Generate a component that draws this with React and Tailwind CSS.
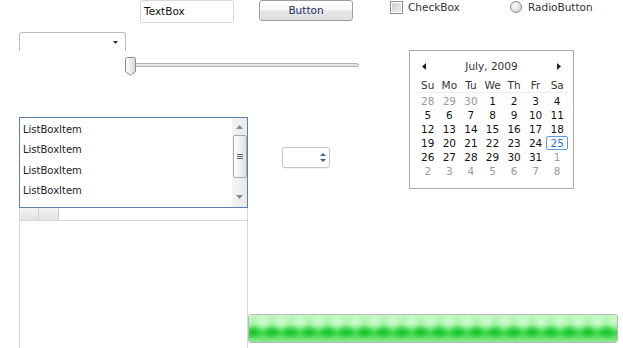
import React from "react";

const FONT = "font-['DejaVu_Sans',sans-serif]";

const weeks = [
  [[28, 1], [29, 1], [30, 1], [1], [2], [3], [4]],
  [[5], [6], [7], [8], [9], [10], [11]],
  [[12], [13], [14], [15], [16], [17], [18]],
  [[19], [20], [21], [22], [23], [24], [25, 0, 1]],
  [[26], [27], [28], [29], [30], [31], [1, 1]],
  [[2, 1], [3, 1], [4, 1], [5, 1], [6, 1], [7, 1], [8, 1]],
];

const dayNames = ["Su", "Mo", "Tu", "We", "Th", "Fr", "Sa"];

function Calendar() {
  return (
    <div className="absolute left-[409px] top-[50px] w-[165px] h-[139px] border border-[#ababab] bg-white pt-[8px]">
      {/* Header */}
      <div className="flex items-center justify-between h-[14px] pl-[12px] pr-[12px]">
        <svg width="4" height="7" viewBox="0 0 4 7">
          <path d="M4 0 L0 3.5 L4 7 Z" fill="#222" />
        </svg>
        <span className="text-[10.5px] text-[#333] leading-none">July, 2009</span>
        <svg width="4" height="7" viewBox="0 0 4 7">
          <path d="M0 0 L4 3.5 L0 7 Z" fill="#222" />
        </svg>
      </div>
      <div className="ml-[7px] w-[151px] mt-[6px] grid grid-cols-7 h-[14px] border-b border-[#ececec]">
        {dayNames.map((d) => (
          <div key={d} className="flex items-center justify-center text-[10.5px] text-[#333] leading-none">
            {d}
          </div>
        ))}
      </div>
      <div className="ml-[7px] w-[151px] mt-[1px] grid grid-cols-7">
        {weeks.flat().map(([n, other, today], i) => (
          <div
            key={i}
            className={
              "flex items-center justify-center h-[14px] text-[10.5px] leading-none " +
              (today
                ? "border border-[#5b9ddf] rounded-[2px] text-[#2a6fc9]"
                : other
                ? "text-[#9a9a9a]"
                : "text-[#111]")
            }
          >
            {n}
          </div>
        ))}
      </div>
    </div>
  );
}

function ListBox() {
  return (
    <div className="absolute left-[19px] top-[117px] w-[229px] h-[91px] border border-[#5e80a6] bg-white flex">
      <div className="flex-1 pt-[1px] pl-[3px]">
        {[0, 1, 2, 3].map((i) => (
          <div key={i} className="h-[20.5px] flex items-center text-[10px] text-[#222]">
            ListBoxItem
          </div>
        ))}
      </div>
      {/* Scrollbar */}
      <div className="w-[15px] h-full bg-[linear-gradient(to_right,#f4f4f4,#e9e9e9)] flex flex-col items-center">
        <div className="h-[17px] flex items-center justify-center">
          <svg width="7" height="4" viewBox="0 0 7 4">
            <path d="M0 4 L3.5 0 L7 4 Z" fill="#8a8a8a" />
          </svg>
        </div>
        <div className="w-[14px] h-[43px] rounded-[2px] border border-[#a9a9a9] bg-[linear-gradient(to_right,#ffffff,#e2e2e2)] flex flex-col items-center justify-center gap-[1px]">
          <div className="w-[6px] h-[1px] bg-[#666]" />
          <div className="w-[6px] h-[1px] bg-[#666]" />
          <div className="w-[6px] h-[1px] bg-[#666]" />
        </div>
        <div className="flex-1 flex items-end justify-center pb-[8px]">
          <svg width="7" height="4" viewBox="0 0 7 4">
            <path d="M0 0 L3.5 4 L7 0 Z" fill="#8a8a8a" />
          </svg>
        </div>
      </div>
    </div>
  );
}

function DataGrid() {
  return (
    <div className="absolute left-[19px] top-[208px] w-[229px] h-[150px] border-l border-r border-[#d6d6d6] bg-white">
      <div className="flex h-[13px] border-b border-[#d8d8d8]">
        <div className="w-[19px] h-full bg-[linear-gradient(to_bottom,#f3f3f3,#e3e3e3)] border-r border-[#d0d0d0]" />
        <div className="w-[20px] h-full bg-[linear-gradient(to_bottom,#f3f3f3,#e3e3e3)] border-r border-[#d0d0d0]" />
      </div>
    </div>
  );
}

export default function App() {
  return (
    <div className={`relative w-[623px] h-[348px] overflow-hidden bg-white ${FONT}`}>
      {/* TextBox */}
      <div className="absolute left-[140px] top-0 w-[94px] h-[23px] rounded-[2px] border border-[#d3dae3] bg-white flex items-center pl-[3px] text-[10.5px] text-[#111]">
        TextBox
      </div>

      {/* Button */}
      <div className="absolute left-[259px] top-0 w-[94px] h-[21px] rounded-[3px] border border-[#9c9c9c] bg-[linear-gradient(to_bottom,#ffffff_0%,#f6f6f6_45%,#e6e6e6_55%,#dedede_100%)] flex items-center justify-center text-[10.5px] text-[#1c2e6c]">
        Button
      </div>

      {/* CheckBox */}
      <div className="absolute left-[390px] top-[1px] flex items-center gap-[5px]">
        <div className="w-[13px] h-[13px] border border-[#8d8d8d] bg-white p-[1px]">
          <div className="w-full h-full bg-[linear-gradient(135deg,#cfcfcf,#eeeeee)]" />
        </div>
        <span className="text-[10.5px] text-[#333] leading-none">CheckBox</span>
      </div>

      {/* RadioButton */}
      <div className="absolute left-[510px] top-[1px] flex items-center gap-[6px]">
        <div className="w-[12px] h-[12px] rounded-full border border-[#8d8d8d] bg-[radial-gradient(circle_at_40%_35%,#ffffff,#d8d8d8_70%,#c8c8c8)]" />
        <span className="text-[10.5px] text-[#333] leading-none">RadioButton</span>
      </div>

      {/* ComboBox */}
      <div className="absolute left-[19px] top-[32px] w-[107px] h-[19px] rounded-t-[3px] border-t border-l border-r border-[#bdbdbd] bg-white flex items-center justify-end pr-[7px]">
        <svg width="5" height="3" viewBox="0 0 5 3">
          <path d="M0 0 L5 0 L2.5 3 Z" fill="#333" />
        </svg>
      </div>

      {/* Slider */}
      <div className="absolute left-[125px] top-[63px] w-[234px] h-[4px] rounded-[2px] border border-[#b0b0b0] bg-[#e7e7e7]" />
      <svg className="absolute left-[125px] top-[57px]" width="12" height="20" viewBox="0 0 12 20">
        <defs>
          <linearGradient id="thumb" x1="0" y1="0" x2="1" y2="0">
            <stop offset="0" stopColor="#ffffff" />
            <stop offset="1" stopColor="#d9d9d9" />
          </linearGradient>
        </defs>
        <path d="M0.5 2.5 Q0.5 0.5 2.5 0.5 H8.5 Q10.5 0.5 10.5 2.5 V14.5 L5.5 18.5 L0.5 14.5 Z" fill="url(#thumb)" stroke="#8a8a8a" />
      </svg>

      <Calendar />
      <ListBox />
      <DataGrid />

      {/* NumericUpDown */}
      <div className="absolute left-[282px] top-[147px] w-[48px] h-[21px] rounded-[3px] border border-[#c6c6c6] bg-white shadow-[0_1px_1px_rgba(0,0,0,0.06)] flex flex-col items-end justify-center gap-[3px] pr-[3px]">
        <svg width="6" height="3" viewBox="0 0 6 3">
          <path d="M0 3 L3 0 L6 3 Z" fill="#3d5a9f" />
        </svg>
        <svg width="6" height="3" viewBox="0 0 6 3">
          <path d="M0 0 L3 3 L6 0 Z" fill="#3d5a9f" />
        </svg>
      </div>

      {/* ProgressBar */}
      <div className="absolute left-[248px] top-[314px] w-[370px] h-[29px] rounded-[3px] border border-[#b8b8b8] bg-white">
        <div className="relative w-full h-full rounded-[2px] overflow-hidden bg-[linear-gradient(to_bottom,#c2f7c2_0%,#a6f3a6_30%,#6fe878_52%,#3ad94b_66%,#55de62_80%,#8fe996_100%)]">
          <div className="absolute inset-0 bg-[radial-gradient(closest-side,rgba(16,190,34,0.85),rgba(16,190,34,0))] bg-[length:18.6px_14px] bg-repeat-x bg-[position:-5px_10px]" />
          <div className="absolute inset-0 bg-[radial-gradient(closest-side,rgba(230,255,230,0.65),rgba(230,255,230,0))] bg-[length:18.6px_14px] bg-repeat-x bg-[position:4.3px_0px]" />
        </div>
      </div>
    </div>
  );
}
